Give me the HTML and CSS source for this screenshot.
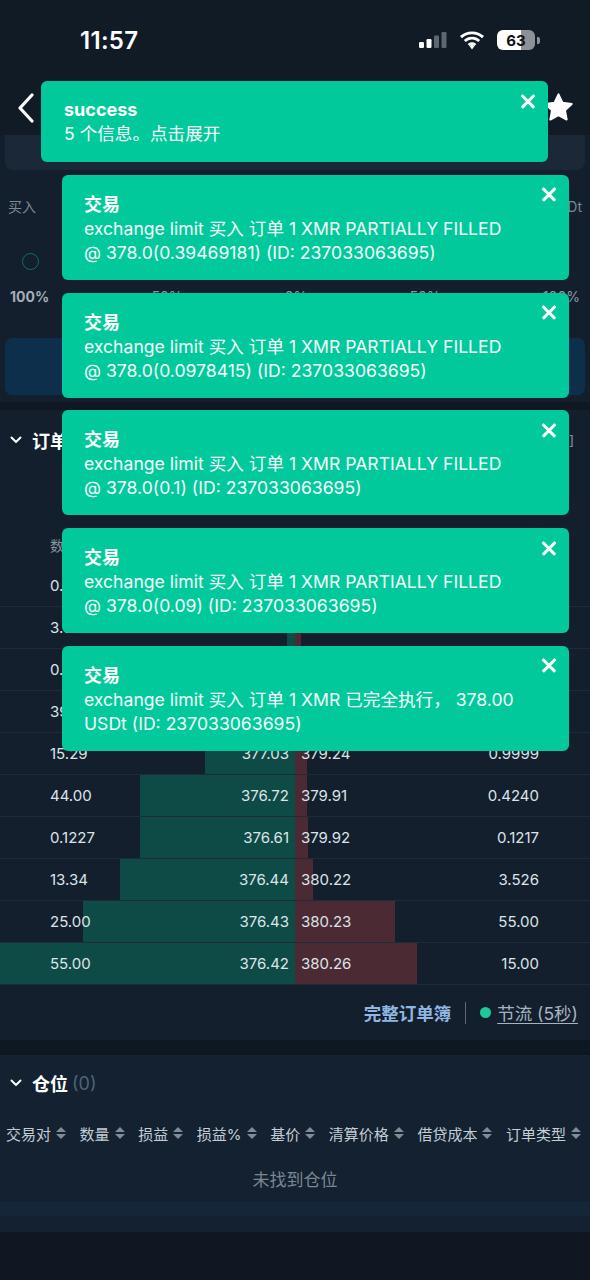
FILE: index.html
```html
<!DOCTYPE html>
<html lang="zh">
<head>
  <meta charset="UTF-8">
  <title>XMR/USDt</title>
  <link rel="stylesheet" href="styles.css">
</head>
<body>

  <div class="status-bar">
    <span class="clock">11:57</span>
    <div class="status-icons">
      <svg class="signal" width="28" height="16" viewBox="0 0 28 16">
        <rect x="0" y="10" width="5" height="6" rx="1.2" fill="#fff"/>
        <rect x="7.5" y="7" width="5" height="9" rx="1.2" fill="#fff"/>
        <rect x="15" y="3.5" width="5" height="12.5" rx="1.2" fill="#5d6772"/>
        <rect x="22.5" y="0" width="5" height="16" rx="1.2" fill="#5d6772"/>
      </svg>
      <svg class="wifi" width="26" height="19" viewBox="0 0 26 19">
        <path d="M13 3.2c3.9 0 7.4 1.5 10 4l2-2.1C21.9 2.2 17.7.4 13 .4S4.1 2.2 1 5.1l2 2.1c2.6-2.5 6.1-4 10-4z" fill="#fff"/>
        <path d="M13 8.6c2.4 0 4.6.9 6.2 2.5l2-2.1c-2.1-2.1-5-3.3-8.2-3.3S6.9 6.9 4.8 9l2 2.1c1.6-1.6 3.8-2.5 6.2-2.5z" fill="#fff"/>
        <path d="M13 13.9c1 0 1.9.4 2.5 1L13 18.6l-2.5-3.7c.6-.6 1.5-1 2.5-1z" fill="#fff"/>
        <path d="M13 11.2c1.7 0 3.1.6 4.3 1.7l-1.8 2c-.6-.6-1.5-1-2.5-1s-1.9.4-2.5 1l-1.8-2c1.2-1.1 2.6-1.7 4.3-1.7z" fill="#fff"/>
      </svg>
      <div class="battery">
        <div class="battery-body"><span>63</span></div>
        <div class="battery-tip"></div>
      </div>
    </div>
  </div>

  <header class="top-bar">
    <svg class="back" width="20" height="30" viewBox="0 0 20 30">
      <path d="M16 2 L4 15 L16 28" fill="none" stroke="#fff" stroke-width="3.2" stroke-linecap="round" stroke-linejoin="round"/>
    </svg>
    <span class="pair-title">XMR/USDt</span>
    <svg class="star" width="31" height="31" viewBox="0 0 24 24">
      <path d="M12 1.8l3.1 6.6 7.1.9-5.2 4.9 1.3 7.1L12 17.8l-6.3 3.5 1.3-7.1-5.2-4.9 7.1-.9z" fill="#fff" stroke="#fff" stroke-width="1.6" stroke-linejoin="round"/>
    </svg>
  </header>

  <section class="trade-form">
    <div class="tabs">
      <span class="tab active">限价</span>
      <span class="tab">市价</span>
      <span class="tab">止损</span>
    </div>
    <div class="field">
      <span class="field-label">买入</span>
      <span class="field-unit">USDt</span>
    </div>
    <div class="slider">
      <span class="knob"></span>
    </div>
    <div class="percents">
      <span class="strong">100%</span>
      <span>50%</span>
      <span>0%</span>
      <span>50%</span>
      <span>100%</span>
    </div>
    <button class="submit">买入 XMR</button>
  </section>

  <section class="orderbook">
    <div class="section-head">
      <svg class="caret" width="12" height="8" viewBox="0 0 12 8">
        <path d="M1.5 1.5 L6 6 L10.5 1.5" fill="none" stroke="#fff" stroke-width="2" stroke-linecap="round" stroke-linejoin="round"/>
      </svg>
      <span class="section-title">订单簿</span>
      <span class="head-right">[0.01]</span>
    </div>
    <div class="ob-controls"></div>
    <div class="ob-head">
      <span>数量</span>
      <span>买价</span>
      <span>卖价</span>
      <span>数量</span>
    </div>

    <div class="ob-row">
      <div class="bid" style="--d:60px"><span>0.5291</span><span>377.95</span></div>
      <div class="ask" style="--d:8px"><span>378.02</span><span>0.3120</span></div>
    </div>
    <div class="ob-row">
      <div class="bid" style="--d:8px"><span>3.027</span><span>377.65</span></div>
      <div class="ask" style="--d:6px"><span>378.70</span><span>0.7560</span></div>
    </div>
    <div class="ob-row">
      <div class="bid" style="--d:70px"><span>0.4452</span><span>377.34</span></div>
      <div class="ask" style="--d:8px"><span>378.95</span><span>0.2500</span></div>
    </div>
    <div class="ob-row">
      <div class="bid" style="--d:80px"><span>39.10</span><span>377.21</span></div>
      <div class="ask" style="--d:10px"><span>379.10</span><span>1.204</span></div>
    </div>
    <div class="ob-row">
      <div class="bid" style="--d:90px"><span>15.29</span><span>377.03</span></div>
      <div class="ask" style="--d:12px"><span>379.24</span><span>0.9999</span></div>
    </div>
    <div class="ob-row">
      <div class="bid" style="--d:155px"><span>44.00</span><span>376.72</span></div>
      <div class="ask" style="--d:12px"><span>379.91</span><span>0.4240</span></div>
    </div>
    <div class="ob-row">
      <div class="bid" style="--d:155px"><span>0.1227</span><span>376.61</span></div>
      <div class="ask" style="--d:13px"><span>379.92</span><span>0.1217</span></div>
    </div>
    <div class="ob-row">
      <div class="bid" style="--d:175px"><span>13.34</span><span>376.44</span></div>
      <div class="ask" style="--d:18px"><span>380.22</span><span>3.526</span></div>
    </div>
    <div class="ob-row">
      <div class="bid" style="--d:212px"><span>25.00</span><span>376.43</span></div>
      <div class="ask" style="--d:100px"><span>380.23</span><span>55.00</span></div>
    </div>
    <div class="ob-row">
      <div class="bid" style="--d:295px"><span>55.00</span><span>376.42</span></div>
      <div class="ask" style="--d:122px"><span>380.26</span><span>15.00</span></div>
    </div>

    <div class="ob-footer">
      <a class="full-book">完整订单簿</a>
      <span class="divider"></span>
      <span class="live-dot"></span>
      <a class="throttle">节流 (5秒)</a>
    </div>
  </section>

  <section class="positions">
    <div class="section-head">
      <svg class="caret" width="12" height="8" viewBox="0 0 12 8">
        <path d="M1.5 1.5 L6 6 L10.5 1.5" fill="none" stroke="#fff" stroke-width="2" stroke-linecap="round" stroke-linejoin="round"/>
      </svg>
      <span class="section-title">仓位</span>
      <span class="count">(0)</span>
    </div>
    <div class="pos-cols">
      <span class="col">交易对<i class="sort"></i></span>
      <span class="col">数量<i class="sort"></i></span>
      <span class="col">损益<i class="sort"></i></span>
      <span class="col">损益%<i class="sort"></i></span>
      <span class="col">基价<i class="sort"></i></span>
      <span class="col">清算价格<i class="sort"></i></span>
      <span class="col">借贷成本<i class="sort"></i></span>
      <span class="col">订单类型<i class="sort"></i></span>
    </div>
    <div class="empty">未找到仓位</div>
    <div class="pos-band"></div>
  </section>

  <!-- notifications stack -->
  <div class="toasts">
    <div class="toast summary">
      <div class="toast-title">success</div>
      <div class="toast-text">5 个信息。点击展开</div>
      <span class="close"></span>
    </div>
    <div class="toast">
      <div class="toast-title">交易</div>
      <div class="toast-text">exchange limit 买入 订单 1 XMR PARTIALLY FILLED @ 378.0(0.39469181) (ID: 237033063695)</div>
      <span class="close"></span>
    </div>
    <div class="toast">
      <div class="toast-title">交易</div>
      <div class="toast-text">exchange limit 买入 订单 1 XMR PARTIALLY FILLED @ 378.0(0.0978415) (ID: 237033063695)</div>
      <span class="close"></span>
    </div>
    <div class="toast">
      <div class="toast-title">交易</div>
      <div class="toast-text">exchange limit 买入 订单 1 XMR PARTIALLY FILLED @ 378.0(0.1) (ID: 237033063695)</div>
      <span class="close"></span>
    </div>
    <div class="toast">
      <div class="toast-title">交易</div>
      <div class="toast-text">exchange limit 买入 订单 1 XMR PARTIALLY FILLED @ 378.0(0.09) (ID: 237033063695)</div>
      <span class="close"></span>
    </div>
    <div class="toast">
      <div class="toast-title">交易</div>
      <div class="toast-text">exchange limit 买入 订单 1 XMR 已完全执行， 378.00 USDt (ID: 237033063695)</div>
      <span class="close"></span>
    </div>
  </div>

</body>
</html>
```

FILE: styles.css
```css
* {
  box-sizing: border-box;
}

body {
  margin: 0;
  width: 590px;
  height: 1280px;
  overflow: hidden;
  position: relative;
  font-family: Inter, "Noto Sans CJK SC", sans-serif;
  background-color: #0f1822;
  color: #dde3e9;
}

/* status bar */
.status-bar {
  height: 80px;
  background-color: #111b26;
  display: flex;
  align-items: center;
  justify-content: space-between;
  padding: 0 50px 0 80px;
}

.clock {
  font-size: 24px;
  font-weight: 600;
  color: #fff;
  letter-spacing: 0.3px;
}

.status-icons {
  display: flex;
  align-items: center;
  gap: 12px;
}

.battery {
  display: flex;
  align-items: center;
  gap: 2px;
}

.battery-body {
  width: 38px;
  height: 20px;
  border-radius: 6px;
  background: linear-gradient(to right, #fff 63%, #8c9197 63%);
  display: flex;
  align-items: center;
  justify-content: center;
}

.battery-body span {
  font-size: 15px;
  font-weight: 700;
  color: #111;
}

.battery-tip {
  width: 3px;
  height: 7px;
  border-radius: 0 2px 2px 0;
  background-color: #8c9197;
}

/* top bar */
.top-bar {
  height: 55px;
  background-color: #111b26;
  display: flex;
  align-items: center;
  justify-content: space-between;
  padding: 0 16px 0 16px;
}

.pair-title {
  font-size: 18px;
  font-weight: 700;
  color: #fff;
}

/* trade form */
.trade-form {
  background-color: #131f2c;
  padding: 0 5px 7px;
}

.tabs {
  height: 35px;
  background-color: #1a2838;
  border-radius: 0 0 8px 8px;
  display: flex;
  justify-content: space-around;
  align-items: center;
  font-size: 14px;
  color: #8693a0;
}

.field {
  height: 72px;
  display: flex;
  align-items: center;
  justify-content: space-between;
  padding: 0 3px;
  font-size: 14px;
  color: #7d8894;
}

.slider {
  height: 38px;
  display: flex;
  align-items: center;
  padding-left: 17px;
}

.knob {
  width: 17px;
  height: 17px;
  border-radius: 50%;
  border: 1.5px solid #12705d;
}

.percents {
  height: 32px;
  display: flex;
  align-items: center;
  justify-content: space-between;
  padding: 0 5px 0 5px;
  font-size: 14px;
  color: #8e99a5;
}

.percents .strong {
  font-weight: 700;
  color: #a3aeb9;
}

.submit {
  display: block;
  width: 100%;
  height: 57px;
  margin-top: 26px;
  border: none;
  border-radius: 7px;
  background-color: #0e2f4c;
  color: #6f8aa6;
  font-family: inherit;
  font-size: 17px;
  font-weight: 700;
}

/* order book */
.orderbook {
  margin-top: 8px;
  background-color: #131f2c;
}

.section-head {
  height: 60px;
  display: flex;
  align-items: center;
  padding: 0 16px 0 10px;
  gap: 10px;
}

.section-title {
  font-size: 18px;
  font-weight: 700;
  color: #fff;
}

.head-right {
  margin-left: auto;
  font-size: 14px;
  color: #8693a0;
}

.ob-controls {
  height: 55px;
}

.ob-head {
  height: 40px;
  display: grid;
  grid-template-columns: 1fr 1fr 1fr 1fr;
  align-items: center;
  padding: 0 51px 0 50px;
  font-size: 14px;
  color: #8693a0;
}

.ob-row {
  height: 42px;
  display: grid;
  grid-template-columns: 295px 295px;
  border-bottom: 1px solid #1e2b39;
  font-size: 15px;
  color: #dde3e9;
}

.bid,
.ask {
  display: flex;
  align-items: center;
  justify-content: space-between;
}

.bid {
  padding: 0 6px 0 50px;
  background: linear-gradient(to left, #0e4b46 var(--d), transparent var(--d));
}

.ask {
  padding: 0 51px 0 6px;
  background: linear-gradient(to right, #4b2a33 var(--d), transparent var(--d));
}

.ob-footer {
  height: 55px;
  display: flex;
  align-items: center;
  justify-content: flex-end;
  padding-right: 12px;
  font-size: 17.5px;
}

.full-book {
  font-weight: 700;
  color: #8fb7e2;
}

.divider {
  width: 1px;
  height: 22px;
  background-color: #5b6875;
  margin: 0 14px;
}

.live-dot {
  width: 11px;
  height: 11px;
  border-radius: 50%;
  background-color: #1bc99b;
  margin-right: 6px;
}

.throttle {
  color: #a6b3c0;
  text-decoration: underline;
  text-underline-offset: 3px;
}

/* positions */
.positions {
  margin-top: 15px;
  background-color: #132131;
  padding-bottom: 16px;
}

.positions .section-head {
  height: 56px;
}

.count {
  font-size: 18px;
  color: #4f6479;
  margin-left: -6px;
}

.pos-cols {
  height: 44px;
  display: flex;
  align-items: center;
  justify-content: space-between;
  padding: 0 9px 0 6px;
  font-size: 15px;
  color: #c4cdd6;
  white-space: nowrap;
}

.col {
  display: flex;
  align-items: center;
  gap: 5px;
}

.sort {
  display: inline-flex;
  flex-direction: column;
  gap: 2px;
}

.sort::before,
.sort::after {
  content: "";
  border-left: 5px solid transparent;
  border-right: 5px solid transparent;
}

.sort::before {
  border-bottom: 5.5px solid #7f8b97;
}

.sort::after {
  border-top: 5.5px solid #7f8b97;
}

.empty {
  height: 47px;
  display: flex;
  align-items: center;
  justify-content: center;
  font-size: 17px;
  color: #7b8692;
}

.pos-band {
  height: 14px;
  background-color: #15253a;
}

/* toasts */
.toasts {
  position: absolute;
  top: 81px;
  left: 41px;
  width: 528px;
  display: flex;
  flex-direction: column;
  gap: 12.75px;
}

.toast {
  position: relative;
  width: 507px;
  height: 105px;
  margin-left: 21px;
  padding: 18px 47px 0 22px;
  border-radius: 6px;
  background-color: #02c99b;
  color: #fff;
}

.toast.summary {
  height: 81px;
  margin-left: 0;
  padding: 17px 40px 0 23px;
}

.toast-title {
  font-size: 18px;
  font-weight: 700;
  line-height: 24px;
}

.toast-text {
  font-size: 17.6px;
  line-height: 24px;
  color: #f4fffb;
}

.close {
  position: absolute;
  top: 12px;
  right: 12px;
  width: 16px;
  height: 16px;
}

.close::before,
.close::after {
  content: "";
  position: absolute;
  left: -1px;
  top: 6.5px;
  width: 18px;
  height: 2.6px;
  border-radius: 1px;
  background-color: #fff;
  transform: rotate(45deg);
}

.close::after {
  transform: rotate(-45deg);
}
```
